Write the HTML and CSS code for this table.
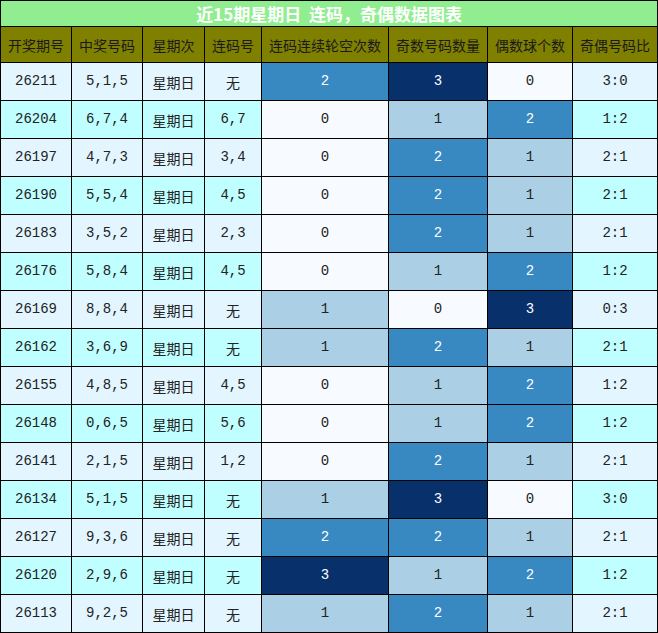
FILE: index.html
```html
<!DOCTYPE html>
<html lang="zh">
<head>
<meta charset="utf-8">
<link rel="stylesheet" href="styles.css">
</head>
<body>
<table class="chart">
<colgroup>
<col class="c1"><col class="c2"><col class="c3"><col class="c4"><col class="c5"><col class="c6"><col class="c7"><col class="c8">
</colgroup>
<thead>
<tr class="title"><th colspan="8">近15期星期日&nbsp;&nbsp;连码，奇偶数据图表</th></tr>
<tr class="head"><th>开奖期号</th><th>中奖号码</th><th>星期次</th><th>连码号</th><th>连码连续轮空次数</th><th>奇数号码数量</th><th>偶数球个数</th><th>奇偶号码比</th></tr>
</thead>
<tbody>
<tr class="la"><td>26211</td><td>5,1,5</td><td class="cjk">星期日</td><td class="cjk">无</td><td class="b2">2</td><td class="b3">3</td><td class="b0">0</td><td>3:0</td></tr>
<tr class="cy"><td>26204</td><td>6,7,4</td><td class="cjk">星期日</td><td>6,7</td><td class="b0">0</td><td class="b1">1</td><td class="b2">2</td><td>1:2</td></tr>
<tr class="la"><td>26197</td><td>4,7,3</td><td class="cjk">星期日</td><td>3,4</td><td class="b0">0</td><td class="b2">2</td><td class="b1">1</td><td>2:1</td></tr>
<tr class="cy"><td>26190</td><td>5,5,4</td><td class="cjk">星期日</td><td>4,5</td><td class="b0">0</td><td class="b2">2</td><td class="b1">1</td><td>2:1</td></tr>
<tr class="la"><td>26183</td><td>3,5,2</td><td class="cjk">星期日</td><td>2,3</td><td class="b0">0</td><td class="b2">2</td><td class="b1">1</td><td>2:1</td></tr>
<tr class="cy"><td>26176</td><td>5,8,4</td><td class="cjk">星期日</td><td>4,5</td><td class="b0">0</td><td class="b1">1</td><td class="b2">2</td><td>1:2</td></tr>
<tr class="la"><td>26169</td><td>8,8,4</td><td class="cjk">星期日</td><td class="cjk">无</td><td class="b1">1</td><td class="b0">0</td><td class="b3">3</td><td>0:3</td></tr>
<tr class="cy"><td>26162</td><td>3,6,9</td><td class="cjk">星期日</td><td class="cjk">无</td><td class="b1">1</td><td class="b2">2</td><td class="b1">1</td><td>2:1</td></tr>
<tr class="la"><td>26155</td><td>4,8,5</td><td class="cjk">星期日</td><td>4,5</td><td class="b0">0</td><td class="b1">1</td><td class="b2">2</td><td>1:2</td></tr>
<tr class="cy"><td>26148</td><td>0,6,5</td><td class="cjk">星期日</td><td>5,6</td><td class="b0">0</td><td class="b1">1</td><td class="b2">2</td><td>1:2</td></tr>
<tr class="la"><td>26141</td><td>2,1,5</td><td class="cjk">星期日</td><td>1,2</td><td class="b0">0</td><td class="b2">2</td><td class="b1">1</td><td>2:1</td></tr>
<tr class="cy"><td>26134</td><td>5,1,5</td><td class="cjk">星期日</td><td class="cjk">无</td><td class="b1">1</td><td class="b3">3</td><td class="b0">0</td><td>3:0</td></tr>
<tr class="la"><td>26127</td><td>9,3,6</td><td class="cjk">星期日</td><td class="cjk">无</td><td class="b2">2</td><td class="b2">2</td><td class="b1">1</td><td>2:1</td></tr>
<tr class="cy"><td>26120</td><td>2,9,6</td><td class="cjk">星期日</td><td class="cjk">无</td><td class="b3">3</td><td class="b1">1</td><td class="b2">2</td><td>1:2</td></tr>
<tr class="la"><td>26113</td><td>9,2,5</td><td class="cjk">星期日</td><td class="cjk">无</td><td class="b1">1</td><td class="b2">2</td><td class="b1">1</td><td>2:1</td></tr>
</tbody>
</table>
</body>
</html>
```
FILE: styles.css
```css
html, body {
  margin: 0;
  padding: 0;
  background: #ffffff;
}
.chart {
  border-collapse: collapse;
  table-layout: fixed;
  width: 658px;
  font-family: "Liberation Mono", "Noto Sans CJK SC", monospace;
  font-size: 14px;
  color: #222222;
}
.c1, .c2 { width: 71px; }
.c3 { width: 62px; }
.c4 { width: 57px; }
.c5 { width: 127px; }
.c6 { width: 99px; }
.c7, .c8 { width: 85px; }
.chart th, .chart td {
  border: 1px solid #000000;
  padding: 0;
  text-align: center;
  vertical-align: middle;
}
.title th {
  height: 25px;
  background: #90ee90;
  color: #ffffff;
  font-family: "Noto Sans CJK SC", sans-serif;
  font-weight: bold;
  font-size: 17px;
  line-height: 24px;
}
.head th {
  height: 35px;
  background: #808000;
  color: #1a1a1a;
  font-family: "Noto Sans CJK SC", sans-serif;
  font-weight: normal;
  font-size: 14px;
  line-height: 20px;
}
.chart td {
  height: 38px;
  line-height: 18px;
  padding-bottom: 2px;
  box-sizing: border-box;
}
.la td { background: #e3f6ff; }
.cy td { background: #c0ffff; }
.chart td.cjk {
  font-family: "Noto Sans CJK SC", sans-serif;
  padding-top: 1px;
  padding-bottom: 0;
}
.chart td.b0 { background: #f7fbff; }
.chart td.b1 { background: #abcfe5; }
.chart td.b2 { background: #3888c1; color: #ffffff; }
.chart td.b3 { background: #08306b; color: #ffffff; }
```
